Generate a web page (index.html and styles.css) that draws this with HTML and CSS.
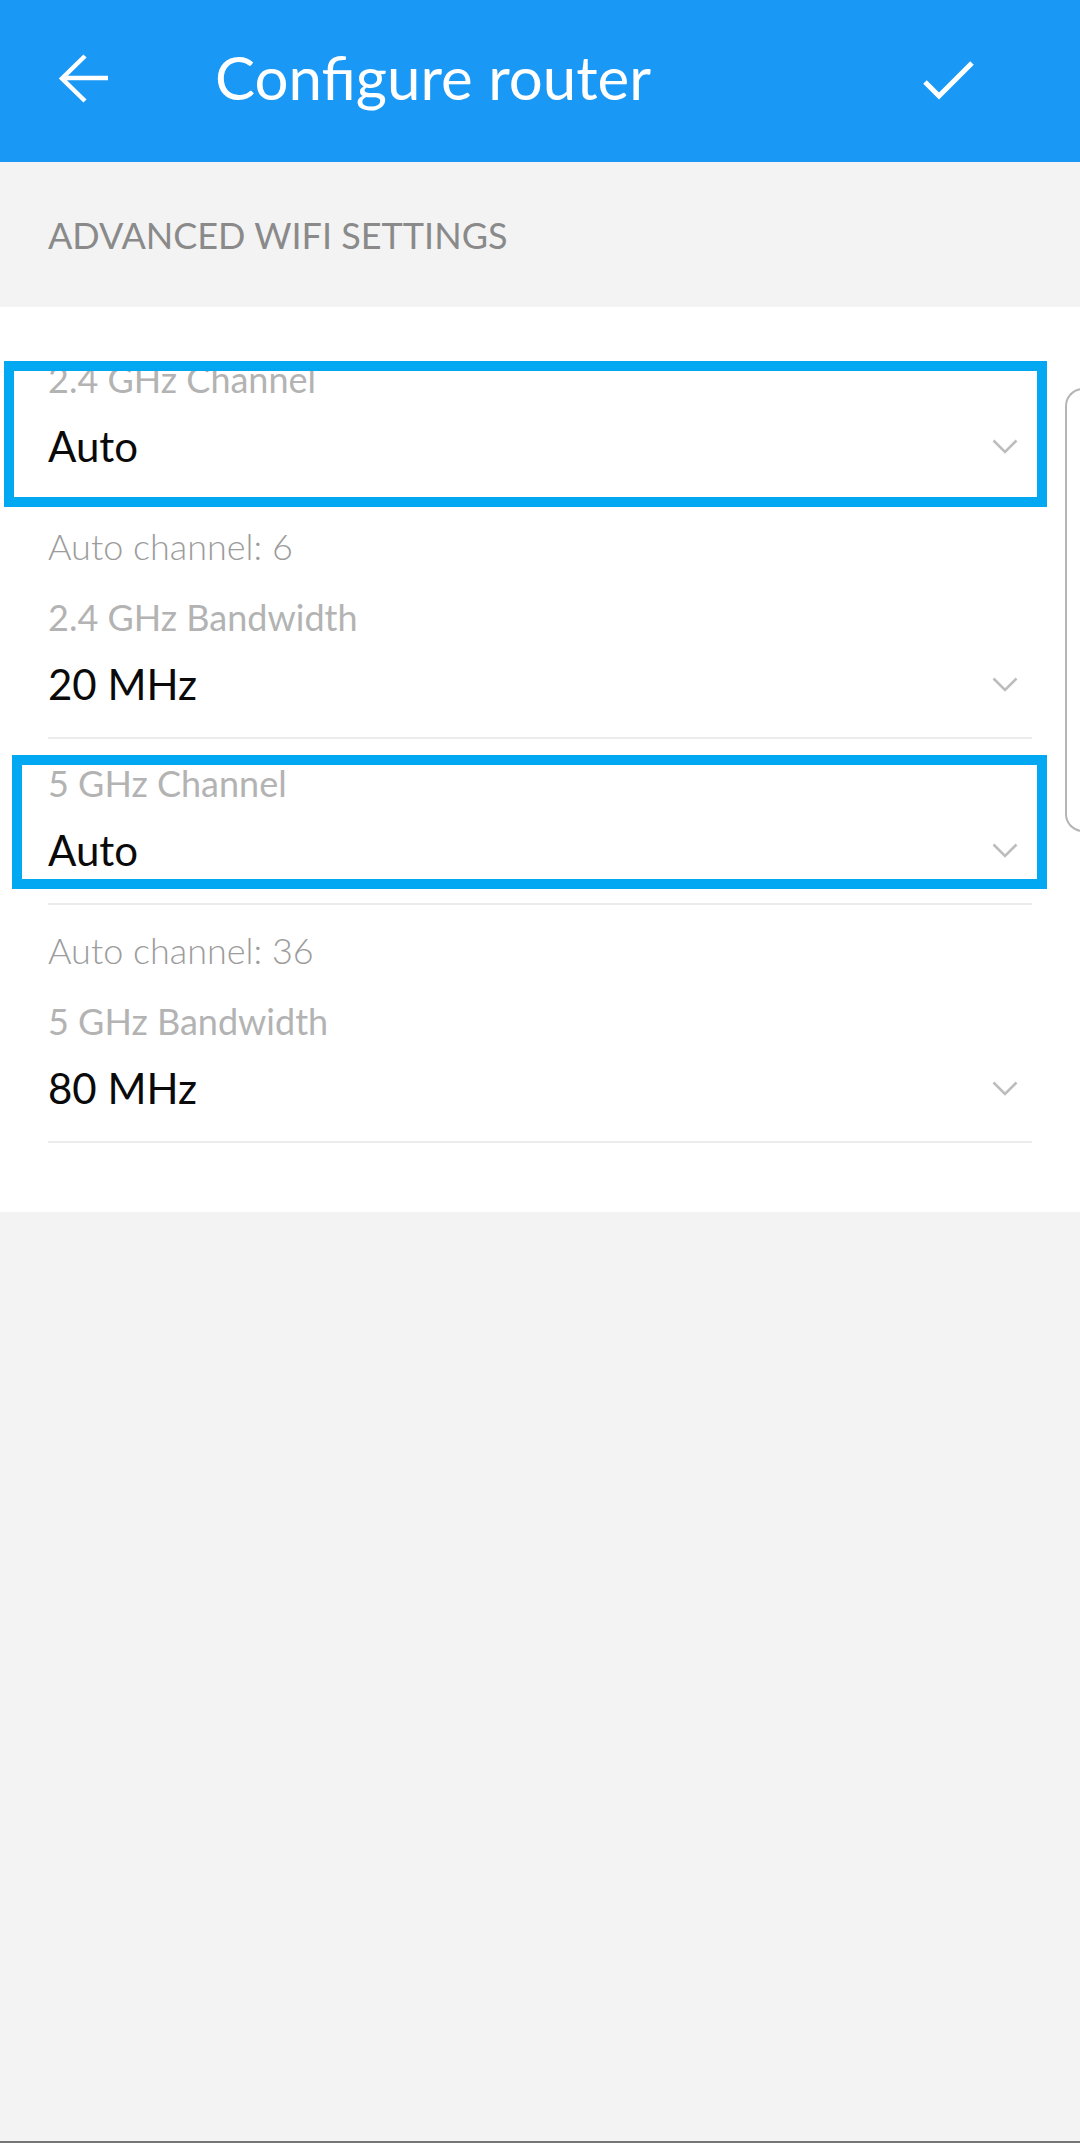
FILE: index.html
```html
<!DOCTYPE html>
<html lang="en">
<head>
    <meta charset="UTF-8">
    <meta name="viewport" content="width=device-width, initial-scale=1.0">
    <title>Configure router</title>
    <link rel="stylesheet" href="styles.css">
</head>
<body>

<div class="page">
    <header class="appbar">
        <svg class="appbar-icon back" viewBox="0 0 56 56" width="56" height="56">
            <path d="M52 28H7M29 6L6 28.5L29 51" />
        </svg>
        <h1 class="appbar-title">Configure router</h1>
        <svg class="appbar-icon confirm" viewBox="0 0 56 56" width="56" height="56">
            <path d="M5 30L19 44L52 11" />
        </svg>
    </header>

    <div class="section-head">ADVANCED WIFI SETTINGS</div>

    <!-- 下拉选项列表 -->
    <div class="card">
        <div class="field">
            <div class="field-label">2.4 GHz Channel</div>
            <div class="select">
                <span>Auto</span>
                <svg class="chevron" viewBox="0 0 26 15" width="26" height="15"><path d="M1.5 1.5L13 13L24.5 1.5" /></svg>
            </div>
            <div class="mark mark-first"></div>
        </div>
        <div class="hint">Auto channel: 6</div>

        <div class="field">
            <div class="field-label">2.4 GHz Bandwidth</div>
            <div class="select">
                <span>20 MHz</span>
                <svg class="chevron" viewBox="0 0 26 15" width="26" height="15"><path d="M1.5 1.5L13 13L24.5 1.5" /></svg>
            </div>
        </div>

        <div class="field">
            <div class="field-label">5 GHz Channel</div>
            <div class="select">
                <span>Auto</span>
                <svg class="chevron" viewBox="0 0 26 15" width="26" height="15"><path d="M1.5 1.5L13 13L24.5 1.5" /></svg>
            </div>
            <div class="mark mark-second"></div>
        </div>
        <div class="hint">Auto channel: 36</div>

        <div class="field">
            <div class="field-label">5 GHz Bandwidth</div>
            <div class="select">
                <span>80 MHz</span>
                <svg class="chevron" viewBox="0 0 26 15" width="26" height="15"><path d="M1.5 1.5L13 13L24.5 1.5" /></svg>
            </div>
        </div>
    </div>

    <div class="edge-handle"></div>
</div>

</body>
</html>
```

FILE: styles.css
```css
/* 基本样式 */
body {
    margin: 0;
    background-color: #f3f3f3;
    font-family: Lato, "Liberation Sans", sans-serif;
}
.page {
    position: relative;
    min-height: 100vh;
    box-sizing: border-box;
    border-bottom: 2px solid #767676;
}

/* 顶部栏 */
.appbar {
    display: flex;
    align-items: flex-start;
    height: 162px;
    box-sizing: border-box;
    background-color: #1a98f5;
    color: #fff;
}
.appbar-icon {
    flex: none;
    fill: none;
    stroke: #fff;
    stroke-width: 4.5;
}
.appbar-icon.back {
    margin: 50px 0 0 56px;
}
.appbar-icon.confirm {
    margin: 52px 104px 0 auto;
    stroke-width: 5;
}
.appbar-title {
    margin: 43px 0 0 103px;
    font-size: 60px;
    font-weight: 400;
    line-height: 68px;
}

/* 分组标题 */
.section-head {
    padding: 53px 48px 52px;
    font-size: 36px;
    line-height: 40px;
    color: #8a8a8a;
}

/* 列表卡片 */
.card {
    background-color: #fff;
    padding: 51px 48px 69px;
}
.field {
    position: relative;
    border-bottom: 2px solid #ececec;
    padding-bottom: 28px;
}
.field + .field {
    margin-top: 23px;
}
.field-label {
    font-size: 36px;
    line-height: 42px;
    color: #b3b3b3;
}
.select {
    display: flex;
    align-items: center;
    justify-content: space-between;
    margin-top: 21px;
    font-size: 42px;
    line-height: 50px;
    color: #0a0a0a;
}
.chevron {
    margin-right: 14px;
    fill: none;
    stroke: #bdbdbd;
    stroke-width: 2.6;
}
.hint {
    margin: 25px 0 30px;
    font-size: 36px;
    font-weight: 300;
    line-height: 40px;
    color: #9c9c9c;
}

/* 标注框 */
.mark {
    position: absolute;
    border: 10px solid #03a8f2;
    box-sizing: border-box;
}
.mark-first {
    top: 3px;
    left: -44px;
    right: -15px;
    bottom: -8px;
}
.mark-second {
    top: -7px;
    left: -36px;
    right: -15px;
    bottom: 14px;
}

/* 右侧边缘把手 */
.edge-handle {
    position: absolute;
    top: 388px;
    left: 1065px;
    width: 40px;
    height: 444px;
    box-sizing: border-box;
    border: 2px solid #b5b5b5;
    border-right: none;
    border-radius: 18px 0 0 18px;
}
```
